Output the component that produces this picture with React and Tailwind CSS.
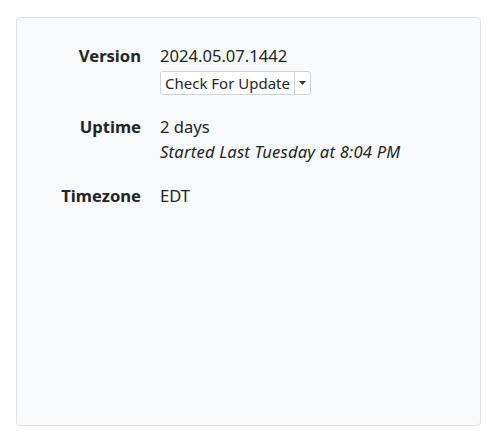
import React from 'react';

const rows = [
    { label: 'Version', key: 'version' },
    { label: 'Uptime', key: 'uptime' },
    { label: 'Timezone', key: 'tz' },
];

function CheckButton() {
    return (
        <div className="mt-[3px] inline-flex h-[24px] items-stretch rounded-[3px] border border-[#ced4da] bg-white text-[15px] leading-none text-[#212529]">
            <span className="flex items-center pl-[4px] pr-[4px]">Check For Update</span>
            <span className="flex w-[16px] items-center justify-center border-l border-[#ced4da]">
                <svg width="7" height="4" viewBox="0 0 7 4">
                    <path d="M0 0h7L3.5 4z" fill="#343a40" />
                </svg>
            </span>
        </div>
    );
}

export default function App() {
    const values = {
        version: (
            <div className="flex flex-col items-start">
                <span>2024.05.07.1442</span>
                <CheckButton />
            </div>
        ),
        uptime: (
            <div className="flex flex-col">
                <span>2 days</span>
                <span className="italic tracking-[0.2px]">Started Last Tuesday at 8:04 PM</span>
            </div>
        ),
        tz: <span>EDT</span>,
    };

    return (
        <div
            className="min-h-[447px] bg-white pt-[17px] pl-4"
            style={{ fontFamily: '"Noto Sans", "Open Sans", sans-serif' }}
        >
            <div className="h-[409px] w-[465px] rounded-[4px] border border-[#dee2e6] bg-[#f8f9fa] pt-[25px]">
                <div className="grid grid-cols-[124px_1fr] gap-x-[19px] gap-y-[19px] text-[16.6px] leading-[25px] text-[#212529]">
                    {rows.map((r) => (
                        <React.Fragment key={r.key}>
                            <div className="text-right font-bold">{r.label}</div>
                            <div>{values[r.key]}</div>
                        </React.Fragment>
                    ))}
                </div>
            </div>
        </div>
    );
}
